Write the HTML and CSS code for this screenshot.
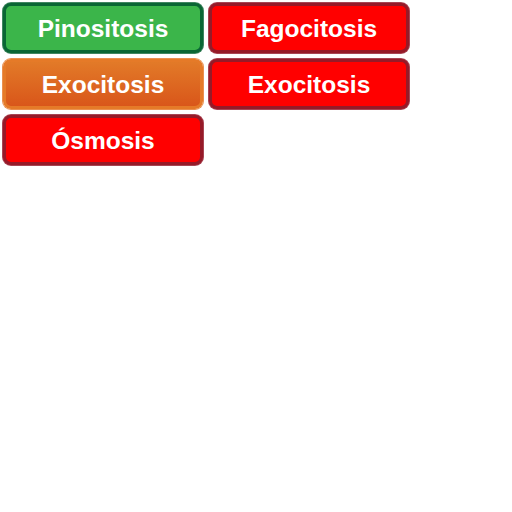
FILE: index.html
```html
<!DOCTYPE html>
<html>
<head>
<meta charset="utf-8">
<link rel="stylesheet" href="styles.css">
</head>
<body>
<div class="grid">
  <div class="btn green">Pinositosis</div>
  <div class="btn red">Fagocitosis</div>
  <div class="btn orange">Exocitosis</div>
  <div class="btn red">Exocitosis</div>
  <div class="btn red">Ósmosis</div>
</div>
</body>
</html>
```
FILE: styles.css
```css
html, body {
  margin: 0;
  padding: 0;
  background: #ffffff;
}
.grid {
  display: grid;
  grid-template-columns: 200px 200px;
  gap: 6px;
  padding: 3px;
}
.btn {
  box-sizing: border-box;
  height: 50px;
  padding-top: 2px;
  border-radius: 8px;
  border: 3px solid;
  display: flex;
  align-items: center;
  justify-content: center;
  font-family: "Liberation Sans", Arial, sans-serif;
  font-weight: bold;
  font-size: 24.5px;
  color: #ffffff;
}
.green {
  background: #3bb54a;
  border-color: #0a6634;
  box-shadow: 0 0 0 1px #3f8560;
}
.red {
  background: #ff0000;
  border-color: #961a28;
  box-shadow: 0 0 0 1px #a84452;
}
.orange {
  background: linear-gradient(#e27a28, #d9561a);
  border-color: #e57a28;
  box-shadow: 0 0 0 1px #ea9050;
}
```
